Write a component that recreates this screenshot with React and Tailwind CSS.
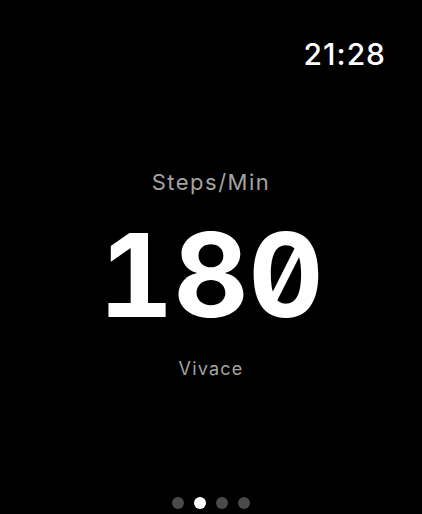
export default function App() {
  return (
    <div className="w-[422px] h-[514px] bg-black flex flex-col overflow-hidden font-['Inter','Noto_Sans',sans-serif]">
      <div className="flex justify-end pr-[36px] pt-[39px]">
        <span className="text-[30px] leading-none text-white font-medium tracking-[1px]">21:28</span>
      </div>
      <div className="flex flex-col items-center">
        <div className="mt-[102px] text-[22px] leading-none text-[#a3a3a3] tracking-[1.5px]">Steps/Min</div>
        <div className="mt-[24px] text-[116px] leading-none text-white font-bold slashed-zero tabular-nums">180</div>
        <div className="mt-[27px] text-[18px] leading-none text-[#a3a3a3] tracking-[1.2px]">Vivace</div>
      </div>
      <div className="mt-auto pb-[5px] flex justify-center gap-[10px]">
        <span className="w-[12px] h-[12px] rounded-full bg-[#4a4a4a]" />
        <span className="w-[12px] h-[12px] rounded-full bg-white" />
        <span className="w-[12px] h-[12px] rounded-full bg-[#4a4a4a]" />
        <span className="w-[12px] h-[12px] rounded-full bg-[#4a4a4a]" />
      </div>
    </div>
  );
}
